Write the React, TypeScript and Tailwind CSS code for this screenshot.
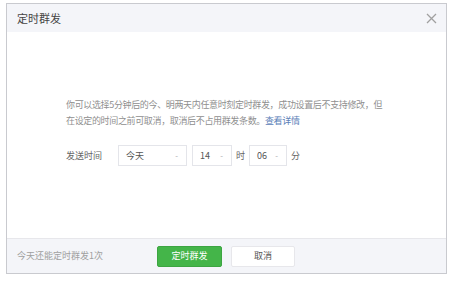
import React from "react";

const font = { fontFamily: '"Noto Sans CJK SC", "Noto Sans", sans-serif' };

function Select({ w, value }: { w: string; value: string }) {
  return (
    <div className={`${w} h-[21px] border border-[#e4e5ea] bg-white flex items-center justify-between pl-[7px] pr-[8px] text-[9px] text-[#555]`}>
      <span>{value}</span>
      <span className="text-[#aaa] text-[8px] leading-none">-</span>
    </div>
  );
}

export default function App() {
  return (
    <div className="w-[450px] h-[282px] bg-white pt-[3px] pl-[6px]" style={font}>
      <div className="w-[441px] h-[271px] border border-[#c9cacf] flex flex-col bg-white">
        <div className="h-[28px] bg-[#f4f5f9] flex items-center justify-between pl-[10px] pr-[9px] shrink-0">
          <span className="text-[11px] text-[#444]">定时群发</span>
          <svg width="11" height="11" viewBox="0 0 11 11">
            <path d="M1 1 L10 10 M10 1 L1 10" stroke="#a0a0a0" strokeWidth="1.3" />
          </svg>
        </div>
        <div className="flex-1 bg-white pt-[65px] pl-[59px] pr-[40px]">
          <p className="text-[9px] leading-[16px] text-[#8f8f8f] tracking-[-0.35px]">
            你可以选择5分钟后的今、明两天内任意时刻定时群发，成功设置后不支持修改，但
            <br />
            在设定的时间之前可取消，取消后不占用群发条数。<span className="text-[#5b80b8]">查看详情</span>
          </p>
          <div className="flex items-center mt-[16px] text-[9px] text-[#666]">
            <span className="w-[52px]">发送时间</span>
            <Select w="w-[69px]" value="今天" />
            <div className="w-[5px]" />
            <Select w="w-[40px]" value="14" />
            <span className="mx-[4px]">时</span>
            <Select w="w-[38px]" value="06" />
            <span className="ml-[4px]">分</span>
          </div>
        </div>
        <div className="h-[35px] bg-[#f4f5f9] border-t border-[#e7e7eb] flex items-center pl-[10px] shrink-0">
          <span className="text-[9px] text-[#a0a0a0] w-[140px]">今天还能定时群发1次</span>
          <button className="w-[65px] h-[21px] bg-[#44b549] text-white text-[9px] rounded-[2px] border border-[#3da542]">定时群发</button>
          <button className="ml-[9px] w-[64px] h-[21px] bg-white text-[#555] text-[9px] rounded-[2px] border border-[#e7e7eb]">取消</button>
        </div>
      </div>
    </div>
  );
}
